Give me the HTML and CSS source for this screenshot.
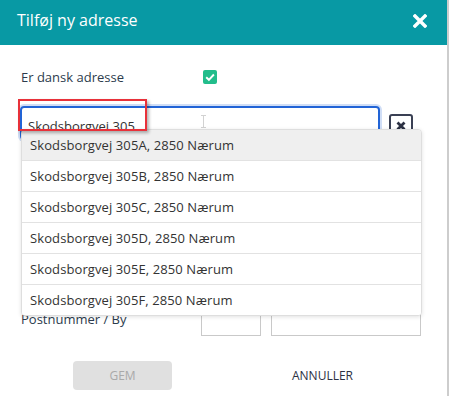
FILE: index.html
```html
<!DOCTYPE html>
<html lang="da">
<head>
<meta charset="utf-8">
<title>Tilføj ny adresse</title>
<link rel="stylesheet" href="styles.css">
</head>
<body>
<div class="screen">
  <div class="modal">
    <header class="modal-header">
      <h1 class="modal-title">Tilføj ny adresse</h1>
      <span class="close-btn">
        <svg width="14" height="14" viewBox="0 0 14 14"><path d="M2 2 L12 12 M12 2 L2 12" stroke="#fff" stroke-width="3.4" stroke-linecap="square" fill="none"/></svg>
      </span>
    </header>
    <div class="modal-body">
      <div class="check-row">
        <span class="field-label">Er dansk adresse</span>
        <span class="checkbox">
          <svg width="14" height="14" viewBox="0 0 14 14"><path d="M3.2 7.2 L5.9 9.8 L10.9 4.5" stroke="#fff" stroke-width="1.9" fill="none"/></svg>
        </span>
      </div>
      <div class="address-row">
        <div class="addr-input">Skodsborgvej 305</div>
        <span class="ibeam">
          <svg width="7" height="13" viewBox="0 0 7 13"><path d="M1 0.5 H6 M3.5 0.5 V12.5 M1 12.5 H6" stroke="#d2d2d2" stroke-width="1" fill="none"/></svg>
        </span>
        <span class="clear-btn">
          <svg width="12" height="12" viewBox="0 0 12 12"><path d="M2.5 2.5 L9.5 9.5 M9.5 2.5 L2.5 9.5" stroke="#2b3042" stroke-width="2.8" fill="none"/></svg>
        </span>
        <ul class="suggestions">
          <li class="active">Skodsborgvej 305A, 2850 Nærum</li>
          <li>Skodsborgvej 305B, 2850 Nærum</li>
          <li>Skodsborgvej 305C, 2850 Nærum</li>
          <li>Skodsborgvej 305D, 2850 Nærum</li>
          <li>Skodsborgvej 305E, 2850 Nærum</li>
          <li>Skodsborgvej 305F, 2850 Nærum</li>
        </ul>
        <div class="annotation"></div>
      </div>
      <div class="postal-row">
        <span class="field-label postal-label">Postnummer / By</span>
        <span class="box box-zip"></span>
        <span class="box box-city"></span>
      </div>
    </div>
    <footer class="modal-footer">
      <span class="btn btn-save">GEM</span>
      <span class="btn btn-cancel">ANNULLER</span>
    </footer>
  </div>
  <div class="edge"></div>
</div>
</body>
</html>
```
FILE: styles.css
```css
* { box-sizing: border-box; }
html, body { margin: 0; padding: 0; background: #fff; }
body { font-family: "Open Sans", "Noto Sans", sans-serif; width: 449px; height: 396px; overflow: hidden; }

.screen { display: flex; width: 449px; height: 396px; }
.modal { width: 447px; height: 396px; background: #fff; display: flex; flex-direction: column; }
.edge { width: 2px; height: 396px; background: #cdcdcd; }

.modal-header {
  height: 45px;
  background: #0899a4;
  display: flex;
  justify-content: space-between;
  align-items: flex-start;
  padding: 9px 20px 0 17px;
}
.modal-title { margin: 0; font-size: 16px; font-weight: 400; line-height: 22px; color: #fff; }
.close-btn { display: flex; margin-top: 5px; }

.modal-body { padding: 22px 0 0 21px; }

.check-row { display: flex; align-items: center; height: 20px; }
.field-label { font-size: 13px; color: #2c3b4d; line-height: 18px; }
.check-row .field-label { width: 182px; }
.checkbox {
  width: 14px; height: 14px;
  background: #22bd8b;
  border-radius: 2px;
  display: flex;
}

.address-row {
  position: relative;
  display: flex;
  align-items: flex-start;
  margin: 19px 0 0 -1px;
  height: 34px;
}
.addr-input {
  width: 360px;
  height: 34px;
  border: 2px solid #2264d6;
  border-radius: 4px;
  box-shadow: 0 0 0 2px rgba(120, 160, 230, 0.35);
  padding: 4px 6px 0;
  font-size: 13px;
  line-height: 28px;
  color: #333;
}
.ibeam { position: absolute; left: 180px; top: 9px; display: flex; }
.clear-btn {
  margin: 8px 0 0 9px;
  width: 24px; height: 24px;
  border: 2px solid #3a4054;
  border-radius: 3px;
  display: flex;
  align-items: center;
  justify-content: center;
}

.suggestions {
  position: absolute;
  left: 1px; top: 23px;
  width: 401px;
  margin: 0; padding: 0;
  list-style: none;
  background: #fff;
  border: 1px solid #dedede;
  border-radius: 4px;
  box-shadow: 0 1px 4px rgba(0, 0, 0, 0.12);
  overflow: hidden;
  z-index: 2;
}
.suggestions li {
  height: 31px;
  padding-left: 8px;
  font-size: 13px;
  letter-spacing: 0.1px;
  line-height: 30px;
  color: #333;
  border-top: 1px solid #e2e2e2;
  background: #fff;
}
.suggestions li:first-child { border-top: none; height: 30px; }
.suggestions li.active { background: #efefef; }

.annotation {
  position: absolute;
  left: -2px; top: -7px;
  width: 129px; height: 32px;
  border: 2px solid #e8313a;
  box-shadow: 2px 2px 3px rgba(0, 0, 0, 0.3);
  z-index: 3;
}

.postal-row {
  display: flex;
  align-items: flex-start;
  margin-top: 165px;
  height: 31px;
}
.postal-label { width: 180px; padding-top: 5px; }
.box { height: 31px; border: 1px solid #c9c9c9; }
.box-zip { width: 60px; }
.box-city { width: 150px; margin-left: 10px; }

.modal-footer {
  display: flex;
  justify-content: center;
  gap: 101px;
  margin-top: 25px;
  padding-right: 2px;
}
.btn {
  width: 99px; height: 29px;
  display: flex; align-items: center; justify-content: center;
  font-size: 12px;
  border-radius: 4px;
}
.btn-save { background: #e0e0e0; color: #a9a9a9; }
.btn-cancel { color: #2c3142; }
```
